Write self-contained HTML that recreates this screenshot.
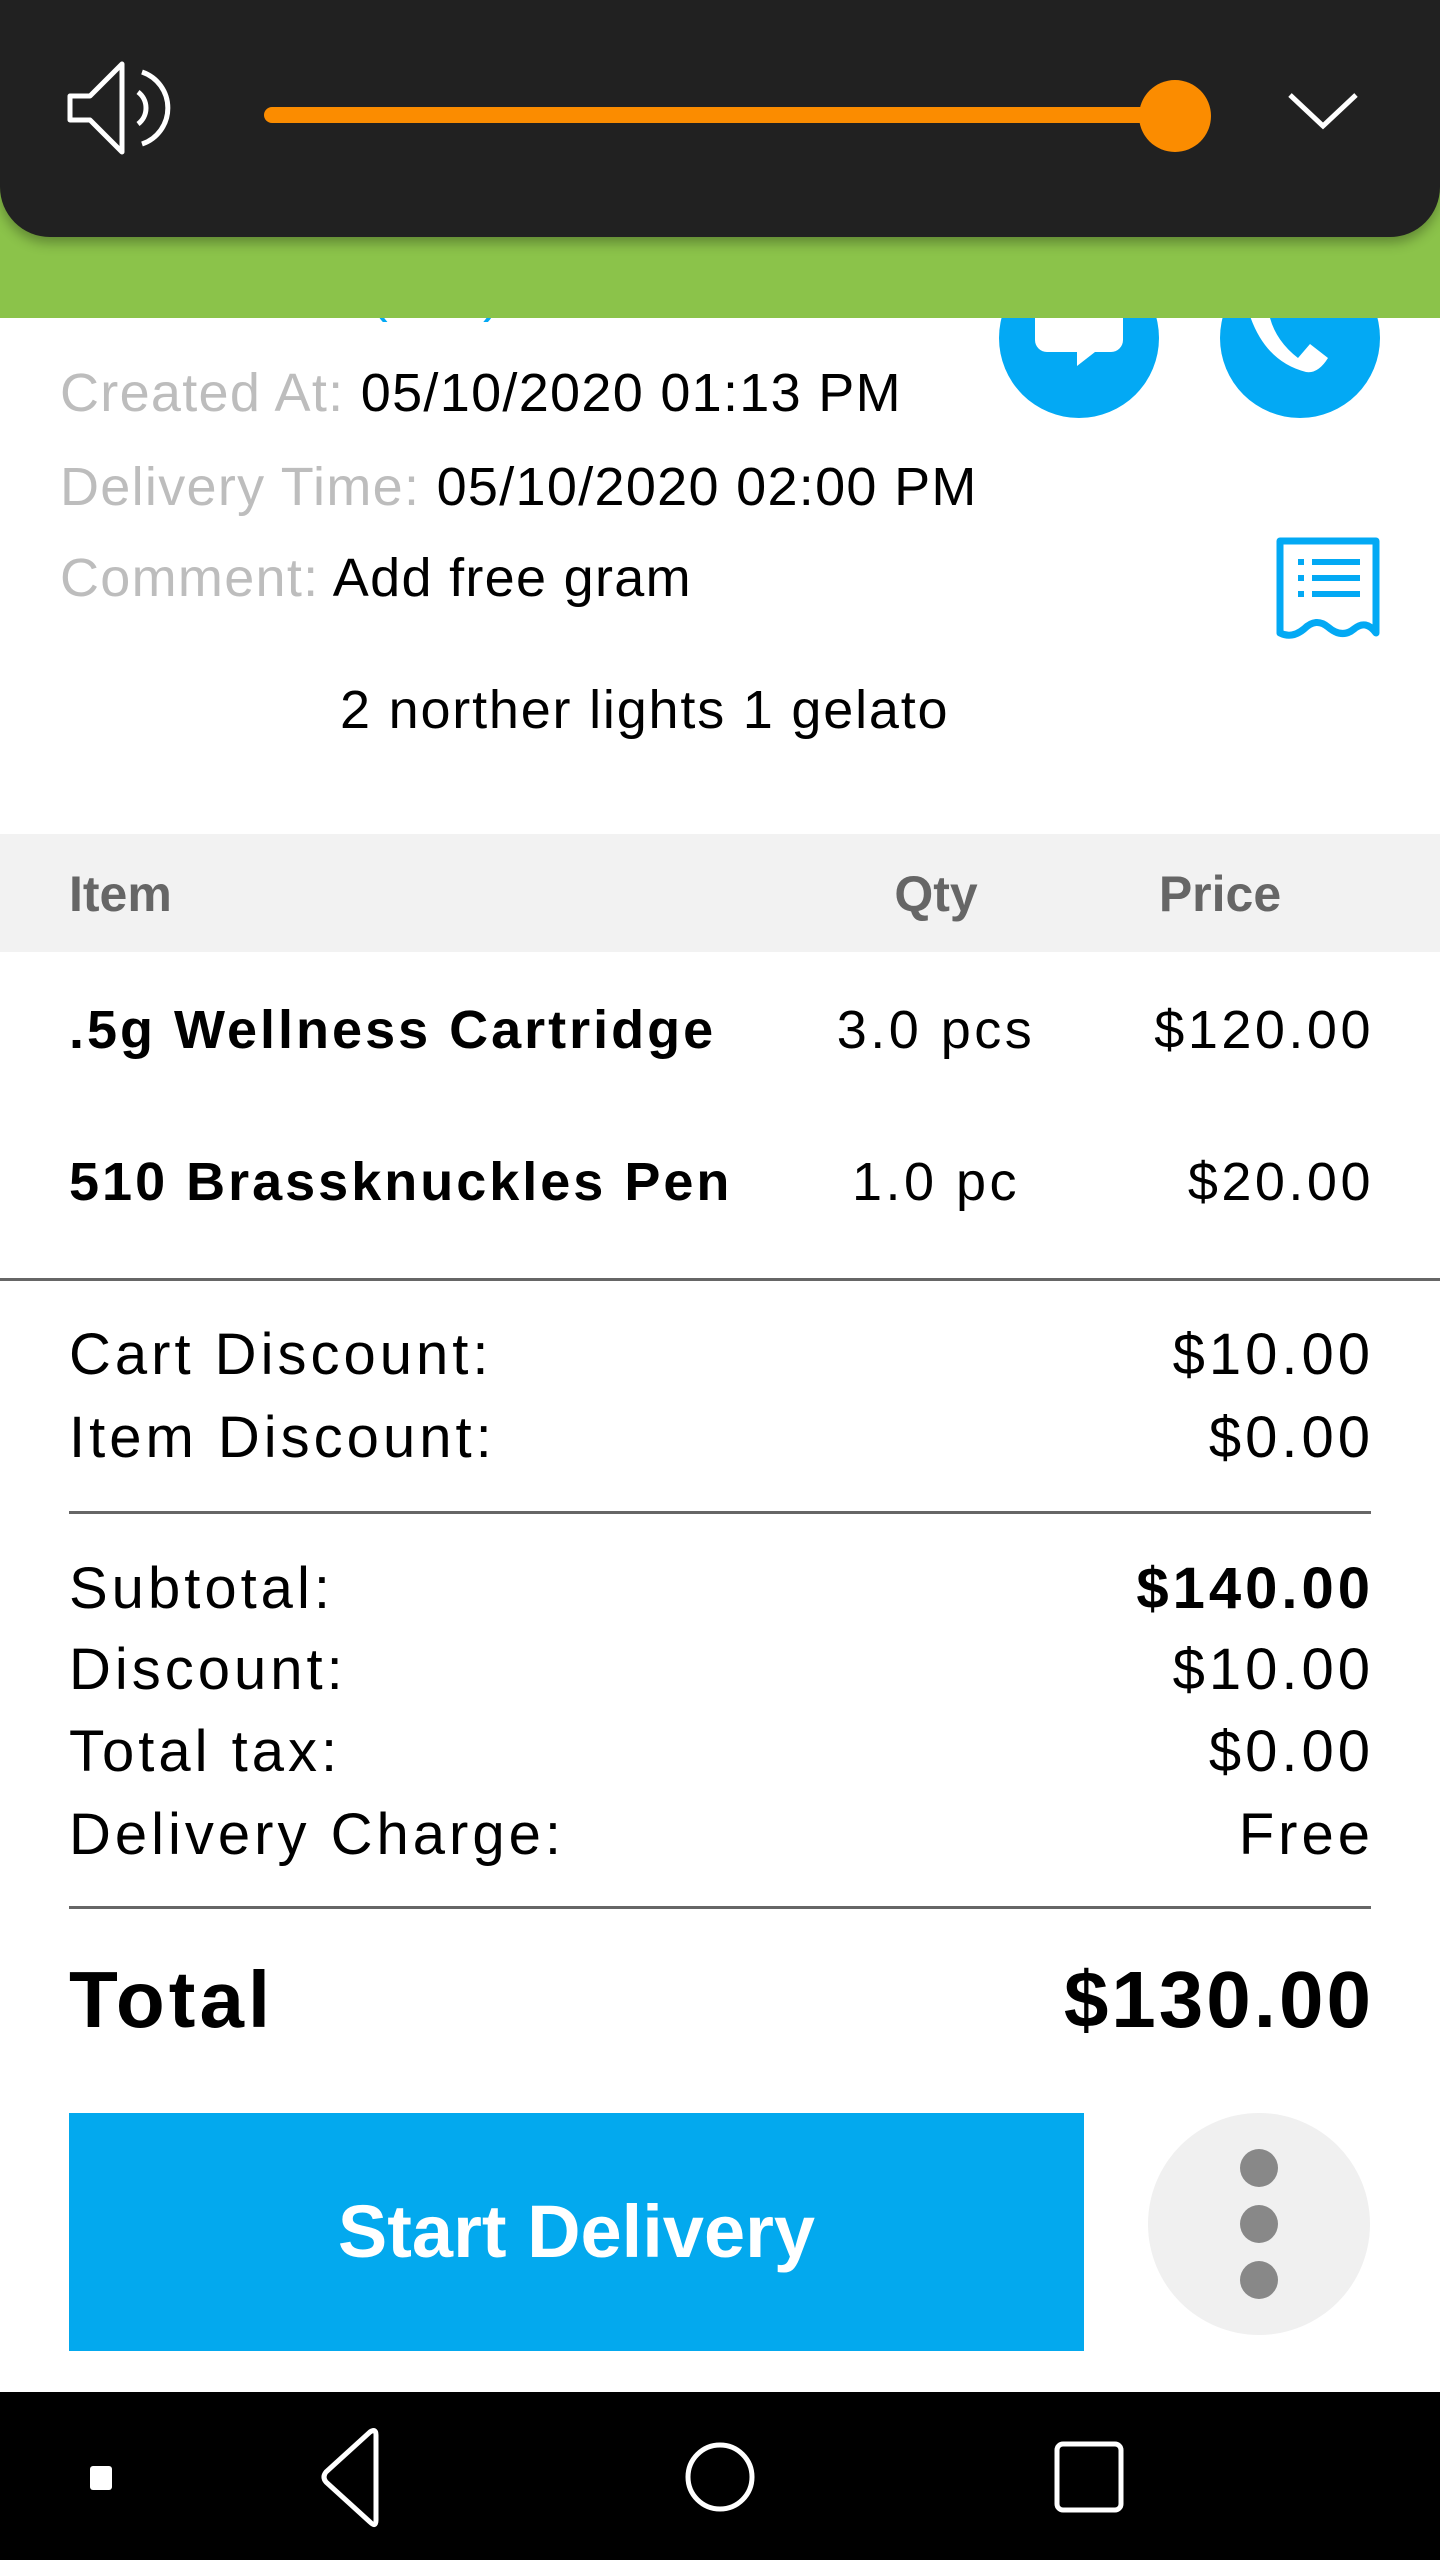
<!DOCTYPE html>
<html><head><meta charset="utf-8"><style>
*{margin:0;padding:0;box-sizing:border-box}
body{width:1440px;height:2560px;position:relative;overflow:hidden;background:#fff;font-family:"Liberation Sans",sans-serif;color:#000}
.a{position:absolute;white-space:nowrap}
.l{color:#bdbdbd}
.r{text-align:right}
.row{font-size:54px;line-height:54px;letter-spacing:3.5px}
.sum{font-size:58px;line-height:58px;letter-spacing:4px}
.info{font-size:54px;line-height:54px;letter-spacing:1.3px}
</style></head><body>
<div class="a info" style="left:60px;top:266px;color:#bdbdbd">Cell Phone: <span style="color:#03a9f4">(415) 555-7011</span></div>
<div class="a" style="left:0;top:0;width:1440px;height:318px;background:#8bc34a"></div>
<div class="a" style="left:0;top:0;width:1440px;height:237px;background:#212121;border-radius:0 0 50px 50px;box-shadow:0 6px 12px rgba(0,0,0,.3)"></div>
<svg class="a" style="left:0;top:0" width="1440" height="240">
<path d="M70 96 L90 96 L122 64 L122 152 L90 120 L70 120 Z" fill="none" stroke="#fff" stroke-width="5" stroke-linejoin="round"/>
<path d="M138 92 A20 20 0 0 1 138 124" fill="none" stroke="#fff" stroke-width="5"/>
<path d="M142 72 A38 38 0 0 1 142 144" fill="none" stroke="#fff" stroke-width="5"/>
<line x1="272" y1="115" x2="1175" y2="115" stroke="#fb8c00" stroke-width="16" stroke-linecap="round"/>
<circle cx="1175" cy="116" r="36" fill="#fb8c00"/>
<path d="M1290 95 L1323 126 L1356 95" fill="none" stroke="#fff" stroke-width="5"/>
</svg>
<svg class="a" style="left:990px;top:318px" width="420" height="110">
<clipPath id="c"><rect x="0" y="0" width="420" height="110"/></clipPath>
<g clip-path="url(#c)">
<circle cx="89" cy="20" r="80" fill="#03a9f4"/>
<path d="M57 -30 h64 a12 12 0 0 1 12 12 v40 a12 12 0 0 1 -12 12 h-16 l-18 14 l0 -14 h-30 a12 12 0 0 1 -12 -12 v-40 a12 12 0 0 1 12 -12z" fill="#fff"/>
<circle cx="310" cy="20" r="80" fill="#03a9f4"/>
<path d="M278 -10 q4 30 30 50 l12 -14 l18 14 q-10 16 -22 14 q-40 -10 -56 -56 q0 -12 10 -16 z" fill="#fff"/>
</g></svg>
<div class="a info" style="left:60px;top:366px"><span class="l">Created At:</span> 05/10/2020 01:13 PM</div>
<div class="a info" style="left:60px;top:460px"><span class="l">Delivery Time:</span> 05/10/2020 02:00 PM</div>
<div class="a info" style="left:60px;top:551px"><span class="l">Comment:</span> Add free gram</div>
<div class="a info" style="left:340px;top:683px;letter-spacing:1.8px">2 norther lights 1 gelato</div>
<svg class="a" style="left:1276px;top:537px" width="106" height="102">
<path d="M4 4 H100 V96 Q90 82 78 92 Q66 102 52 90 Q40 80 28 92 Q16 102 4 96 Z" fill="none" stroke="#03a9f4" stroke-width="7" stroke-linejoin="round"/>
<g fill="#03a9f4"><rect x="22" y="22" width="6" height="6"/><rect x="36" y="22" width="48" height="6"/><rect x="22" y="38" width="6" height="6"/><rect x="36" y="38" width="48" height="6"/><rect x="22" y="54" width="6" height="6"/><rect x="36" y="54" width="48" height="6"/></g>
</svg>
<div class="a" style="left:0;top:834px;width:1440px;height:118px;background:#f2f2f2"></div>
<div class="a" style="left:69px;top:869px;font-size:50px;line-height:50px;font-weight:bold;color:#666">Item</div>
<div class="a" style="left:836px;width:200px;text-align:center;top:869px;font-size:50px;line-height:50px;font-weight:bold;color:#666">Qty</div>
<div class="a" style="left:1120px;width:200px;text-align:center;top:869px;font-size:50px;line-height:50px;font-weight:bold;color:#666">Price</div>
<div class="a row" style="left:69px;top:1003px;font-weight:bold;letter-spacing:3px">.5g Wellness Cartridge</div>
<div class="a row" style="left:786px;width:300px;text-align:center;top:1003px">3.0 pcs</div>
<div class="a r row" style="right:66px;top:1003px">$120.00</div>
<div class="a row" style="left:69px;top:1155px;font-weight:bold;letter-spacing:3px">510 Brassknuckles Pen</div>
<div class="a row" style="left:786px;width:300px;text-align:center;top:1155px">1.0 pc</div>
<div class="a r row" style="right:66px;top:1155px">$20.00</div>
<div class="a" style="left:0;top:1278px;width:1440px;height:3px;background:#666"></div>
<div class="a sum" style="left:69px;top:1326px">Cart Discount:</div>
<div class="a r sum" style="right:66px;top:1326px">$10.00</div>
<div class="a sum" style="left:69px;top:1409px">Item Discount:</div>
<div class="a r sum" style="right:66px;top:1409px">$0.00</div>
<div class="a" style="left:69px;top:1511px;width:1302px;height:3px;background:#666"></div>
<div class="a sum" style="left:69px;top:1560px">Subtotal:</div>
<div class="a r sum" style="right:66px;top:1560px;font-weight:bold">$140.00</div>
<div class="a sum" style="left:69px;top:1641px">Discount:</div>
<div class="a r sum" style="right:66px;top:1641px">$10.00</div>
<div class="a sum" style="left:69px;top:1723px">Total tax:</div>
<div class="a r sum" style="right:66px;top:1723px">$0.00</div>
<div class="a sum" style="left:69px;top:1806px">Delivery Charge:</div>
<div class="a r sum" style="right:66px;top:1806px">Free</div>
<div class="a" style="left:69px;top:1906px;width:1302px;height:3px;background:#666"></div>
<div class="a" style="left:69px;top:1960px;font-size:80px;line-height:80px;font-weight:bold;letter-spacing:4px">Total</div>
<div class="a r" style="right:66px;top:1960px;font-size:80px;line-height:80px;font-weight:bold;letter-spacing:3px">$130.00</div>
<div class="a" style="left:69px;top:2113px;width:1015px;height:238px;background:#03a9ee;color:#fff;font-size:74px;line-height:238px;text-align:center;font-weight:bold">Start Delivery</div>
<div class="a" style="left:1148px;top:2113px;width:222px;height:222px;border-radius:50%;background:#f0f0f0"></div>
<div class="a" style="left:1240px;top:2149px;width:38px;height:38px;border-radius:50%;background:#888"></div>
<div class="a" style="left:1240px;top:2205px;width:38px;height:38px;border-radius:50%;background:#888"></div>
<div class="a" style="left:1240px;top:2261px;width:38px;height:38px;border-radius:50%;background:#888"></div>
<div class="a" style="left:0;top:2392px;width:1440px;height:168px;background:#000"></div>
<svg class="a" style="left:0;top:2392px" width="1440" height="168">
<rect x="90" y="74" width="22" height="24" rx="3" fill="#fff"/>
<path d="M376 43 L376 128 Q376 136 370 130 L326 90 Q322 85 326 80 L370 40 Q376 36 376 43Z" fill="none" stroke="#fff" stroke-width="5" stroke-linejoin="round"/>
<circle cx="720" cy="85" r="32" fill="none" stroke="#fff" stroke-width="5"/>
<rect x="1057" y="52" width="64" height="66" rx="6" fill="none" stroke="#fff" stroke-width="5"/>
</svg>
</body></html>
